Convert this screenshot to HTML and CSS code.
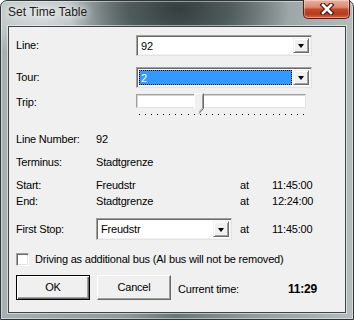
FILE: index.html
```html
<!DOCTYPE html>
<html lang="en">
<head>
    <meta charset="UTF-8">
    <meta name="viewport" content="width=device-width, initial-scale=1.0">
    <title>Set Time Table</title>
    <link rel="stylesheet" href="styles.css">
</head>
<body>
    <div class="window">
        <div class="titlebar">
            <span class="title">Set Time Table</span>
            <div class="close">
                <svg width="16" height="12" viewBox="0 0 16 12">
                    <path d="M4 2 L12 10 M12 2 L4 10" stroke="#4b120a" stroke-width="4.8" stroke-linecap="square"/>
                    <path d="M4 2 L12 10 M12 2 L4 10" stroke="#fff" stroke-width="2.6" stroke-linecap="square"/>
                </svg>
            </div>
        </div>

        <div class="client">
            <div class="row row-line">
                <span class="lbl wide">Line:</span>
                <div class="combo big">
                    <span class="combo-text">92</span>
                    <span class="drop"><i class="arrow"></i></span>
                </div>
            </div>

            <div class="row row-tour">
                <span class="lbl wide">Tour:</span>
                <div class="combo big">
                    <span class="combo-text sel">2</span>
                    <span class="drop"><i class="arrow"></i></span>
                </div>
            </div>

            <div class="row row-trip">
                <span class="lbl wide trip-lbl">Trip:</span>
                <div class="slider">
                    <div class="channel"></div>
                    <div class="ticks"></div>
                    <svg class="thumb" width="10" height="21" viewBox="0 0 10 21">
                        <path d="M0.5 0.5 H9.5 V15.5 L5 20.5 L0.5 15.5 Z" fill="#f0f0f0"/>
                        <path d="M0.5 15.5 V0.5 H9" stroke="#fff" fill="none"/>
                        <path d="M9.5 0.5 V15.5 L5 20.5" stroke="#696969" fill="none"/>
                        <path d="M8.5 1.5 V15 L5 18.8" stroke="#a0a0a0" fill="none"/>
                    </svg>
                </div>
            </div>

            <div class="row text-row first-info">
                <span class="lbl">Line Number:</span>
                <span class="val">92</span>
            </div>
            <div class="row text-row gap10">
                <span class="lbl">Terminus:</span>
                <span class="val">Stadtgrenze</span>
            </div>
            <div class="row text-row gap10">
                <span class="lbl">Start:</span>
                <span class="val">Freudstr</span>
                <span class="at">at</span>
                <span class="time">11:45:00</span>
            </div>
            <div class="row text-row gap3">
                <span class="lbl">End:</span>
                <span class="val">Stadtgrenze</span>
                <span class="at">at</span>
                <span class="time">12:24:00</span>
            </div>

            <div class="row row-stop">
                <span class="lbl">First Stop:</span>
                <div class="combo small">
                    <span class="combo-text">Freudstr</span>
                    <span class="drop"><i class="arrow"></i></span>
                </div>
                <span class="at stop-at">at</span>
                <span class="time">11:45:00</span>
            </div>

            <div class="row row-check">
                <span class="check"></span>
                <span class="check-lbl">Driving as additional bus (AI bus will not be removed)</span>
            </div>

            <div class="row row-buttons">
                <button class="btn default">OK</button>
                <button class="btn">Cancel</button>
                <span class="cur-lbl">Current time:</span>
                <span class="cur-time">11:29</span>
            </div>
        </div>
    </div>
</body>
</html>
```

FILE: styles.css
```css
* { box-sizing: border-box; }
body { margin: 0; font-family: "Liberation Sans", Arial, sans-serif; font-size: 11px; line-height: 13px; color: #000; background: #fff; }

.window {
    width: 354px; height: 320px;
    display: flex; flex-direction: column;
    padding: 0 7px 6px 7px;
    border: 1px solid #2e3737;
    border-radius: 7px 7px 0 0;
    box-shadow: inset 0 0 0 1px rgba(255,255,255,0.45);
    background:
        radial-gradient(ellipse 110px 70px at 178px 8px, #343e3e 0, #4f5a5a 45%, rgba(95,107,107,0) 100%),
        radial-gradient(ellipse 90px 40px at 40px 14px, rgba(225,230,230,0.9) 0, rgba(225,230,230,0) 100%),
        linear-gradient(90deg, #a7b0b0 0, #8f9999 35%, #6a7575 50%, #8f9999 70%, #b4bcbc 100%);
}

.titlebar { height: 25px; display: flex; justify-content: space-between; align-items: flex-start; }
.title { font-size: 12px; line-height: 15px; padding-top: 4px; color: #1c1c1c;
    text-shadow: 0 0 6px rgba(255,255,255,0.9), 0 0 10px rgba(255,255,255,0.8); }

.close {
    width: 47px; height: 19px; margin: -1px -4px 0 0;
    display: flex; align-items: center; justify-content: center;
    border: 1px solid #5c1b10; border-top: none;
    border-radius: 0 0 5px 5px;
    background: linear-gradient(#e9b1a2 0, #db8a74 40%, #c24a2a 52%, #b53a1c 78%, #d0694c 100%);
    box-shadow: inset 0 0 0 1px rgba(255,255,255,0.35);
}

.client {
    flex: 1;
    background: #f0f0f0;
    border: 1px solid #3c4646;
    box-shadow: 0 0 0 1px rgba(255,255,255,0.5);
    padding-left: 7px;
    letter-spacing: -0.2px;
}

.row { display: flex; align-items: center; }
.lbl { width: 80px; flex: none; }
.lbl.wide { width: 120px; }

.row-line { margin-top: 8px; height: 21px; }
.row-tour { margin-top: 11px; height: 21px; }
.row-trip { margin-top: 6px; height: 22px; align-items: flex-start; }
.trip-lbl { padding-top: 2px; }

.combo {
    display: flex; align-items: center;
    background: #fff;
    border: 1px solid;
    border-color: #a0a0a0 #e3e3e3 #e3e3e3 #a0a0a0;
    box-shadow: inset 1px 1px 0 #696969, inset -1px -1px 0 #f0f0f0;
    padding: 2px;
}
.combo.big { width: 176px; height: 21px; }
.combo.small { width: 136px; height: 22px; }
.combo-text { flex: 1; height: 100%; padding: 2px 0 0 2px; }
.combo-text.sel {
    margin-right: 1px;
    background: #3399ff; color: #fff;
    border: 1px dotted #000;
    padding: 1px 0 0 1px;
}
.drop {
    width: 16px; height: 100%;
    display: flex; align-items: center; justify-content: center;
    background: #f0f0f0;
    border: 1px solid;
    border-color: #f0f0f0 #696969 #696969 #f0f0f0;
    box-shadow: inset 1px 1px 0 #fff, inset -1px -1px 0 #a0a0a0;
}
.arrow { width: 0; height: 0; border-left: 3.5px solid transparent; border-right: 3.5px solid transparent; border-top: 4px solid #000; margin-top: 1px; }

.slider { position: relative; width: 170px; height: 22px; }
.channel {
    height: 14px; background: #fff;
    border: 1px solid;
    border-color: #a0a0a0 #e3e3e3 #e3e3e3 #a0a0a0;
    box-shadow: inset 1px 1px 0 #d4d4d4;
}
.ticks {
    margin-top: 6px; height: 1px; width: 167px; margin-left: 3px;
    background: repeating-linear-gradient(90deg, #000 0, #000 1px, transparent 1px, transparent 6.07px);
}
.thumb { position: absolute; left: 58px; top: -1px; }

.text-row { height: 13px; }
.first-info { margin-top: 17px; }
.gap10 { margin-top: 10px; }
.gap3 { margin-top: 3px; }
.val { width: 144px; flex: none; }
.at { width: 32px; flex: none; }
.stop-at { margin-left: 8px; }

.row-stop { margin-top: 10px; height: 22px; }

.row-check { margin-top: 13px; height: 13px; }
.check {
    width: 13px; height: 13px; background: #fff;
    border: 1px solid;
    border-color: #a0a0a0 #fff #fff #a0a0a0;
    box-shadow: inset 1px 1px 0 #696969, inset -1px -1px 0 #e3e3e3;
}
.check-lbl { margin-left: 6px; }

.row-buttons { margin-top: 9px; height: 25px; }
.btn {
    width: 74px; height: 25px; margin-right: 7px;
    font: inherit; letter-spacing: inherit; color: #000;
    background: #f0f0f0;
    border: 1px solid;
    border-color: #fff #696969 #696969 #fff;
    box-shadow: inset -1px -1px 0 #a0a0a0;
    padding: 0;
}
.btn.default {
    border-color: #000;
    box-shadow: inset 1px 1px 0 #fff, inset -1px -1px 0 #696969, inset -2px -2px 0 #a0a0a0;
}
.cur-lbl { padding-top: 3px; width: 110px; }
.cur-time { padding-top: 3px; font-weight: bold; font-size: 12px; }
```
